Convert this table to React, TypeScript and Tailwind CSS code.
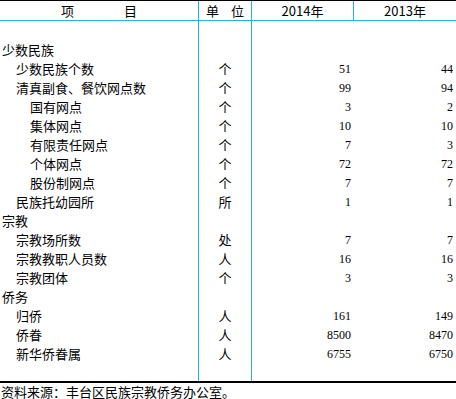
import React from 'react';

type Row = { name: string; level: number; unit?: string; y2014?: string; y2013?: string };

const rows: Row[] = [
  { name: '', level: 0 },
  { name: '少数民族', level: 0 },
  { name: '少数民族个数', level: 1, unit: '个', y2014: '51', y2013: '44' },
  { name: '清真副食、餐饮网点数', level: 1, unit: '个', y2014: '99', y2013: '94' },
  { name: '国有网点', level: 2, unit: '个', y2014: '3', y2013: '2' },
  { name: '集体网点', level: 2, unit: '个', y2014: '10', y2013: '10' },
  { name: '有限责任网点', level: 2, unit: '个', y2014: '7', y2013: '3' },
  { name: '个体网点', level: 2, unit: '个', y2014: '72', y2013: '72' },
  { name: '股份制网点', level: 2, unit: '个', y2014: '7', y2013: '7' },
  { name: '民族托幼园所', level: 1, unit: '所', y2014: '1', y2013: '1' },
  { name: '宗教', level: 0 },
  { name: '宗教场所数', level: 1, unit: '处', y2014: '7', y2013: '7' },
  { name: '宗教教职人员数', level: 1, unit: '人', y2014: '16', y2013: '16' },
  { name: '宗教团体', level: 1, unit: '个', y2014: '3', y2013: '3' },
  { name: '侨务', level: 0 },
  { name: '归侨', level: 1, unit: '人', y2014: '161', y2013: '149' },
  { name: '侨眷', level: 1, unit: '人', y2014: '8500', y2013: '8470' },
  { name: '新华侨眷属', level: 1, unit: '人', y2014: '6755', y2013: '6750' },
  { name: '', level: 0 },
];

const indent = ['pl-[2px]', 'pl-[16px]', 'pl-[30px]'];

export default function App() {
  const cjk = "font-['SimSun','Noto_Sans_CJK_SC',sans-serif]";
  const num = "font-['Liberation_Serif',serif] text-[12px]";
  return (
    <div className={`w-[456px] h-[399px] bg-white text-black text-[13px] leading-none ${cjk}`}>
      <div className="border-t border-black">
        <div className="grid grid-cols-[199px_53px_102px_102px] h-[20px] border-b border-[#1eb4e6]">
          <div className="border-r border-[#1eb4e6] flex items-center justify-center gap-[50px]">
            <span>项</span>
            <span>目</span>
          </div>
          <div className="border-r border-[#1eb4e6] flex items-center justify-center gap-[12px]">
            <span>单</span>
            <span>位</span>
          </div>
          <div className="border-r border-[#1eb4e6] flex items-center justify-center">2014年</div>
          <div className="flex items-center justify-center">2013年</div>
        </div>
        <div className="border-b-[2px] border-black">
          {rows.map((r, i) => (
            <div
              key={i}
              className={`grid grid-cols-[199px_53px_102px_102px] ${i === rows.length - 1 ? 'h-[18px]' : 'h-[19px]'}`}
            >
              <div className={`border-r border-[#1eb4e6] flex items-center ${indent[r.level]}`}>{r.name}</div>
              <div className="border-r border-[#1eb4e6] flex items-center justify-center">{r.unit}</div>
              <div className={`flex items-center justify-end pr-[3px] ${num}`}>{r.y2014}</div>
              <div className={`flex items-center justify-end pr-[3px] ${num}`}>{r.y2013}</div>
            </div>
          ))}
        </div>
      </div>
      <div className="pl-[1px] h-[16px] flex items-center">资料来源：丰台区民族宗教侨务办公室。</div>
    </div>
  );
}
